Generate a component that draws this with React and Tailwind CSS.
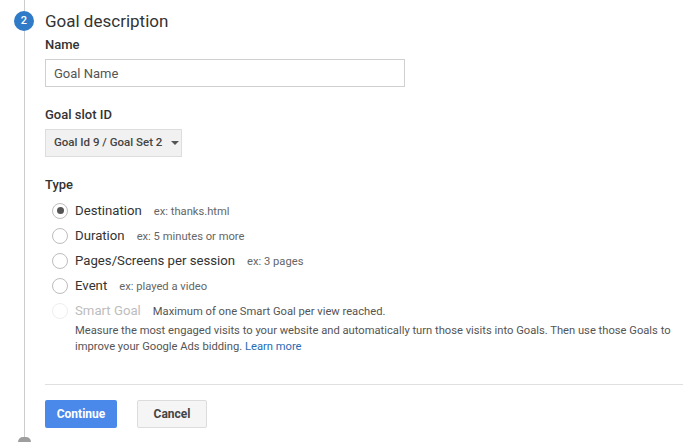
import React from "react";

const types = [
  { label: "Destination", hint: "ex: thanks.html", checked: true },
  { label: "Duration", hint: "ex: 5 minutes or more" },
  { label: "Pages/Screens per session", hint: "ex: 3 pages" },
  { label: "Event", hint: "ex: played a video" },
];

function Radio({ checked, disabled }) {
  return (
    <span
      className={`flex h-[16px] w-[16px] shrink-0 items-center justify-center rounded-full border ${
        disabled ? "border-[#eeeeee]" : "border-[#bdbdbd]"
      } bg-white`}
    >
      {checked && <span className="h-[7px] w-[7px] rounded-full bg-[#555555]" />}
    </span>
  );
}

export default function App() {
  return (
    <div
      className="flex h-[442px] w-[691px] overflow-hidden bg-white text-[#333333]"
      style={{ fontFamily: "Roboto, 'Liberation Sans', sans-serif" }}
    >
      {/* step rail */}
      <div className="flex w-[45px] shrink-0 flex-col">
        <div className="ml-[24px] h-[11px] w-px bg-[#cccccc]" />
        <div className="ml-[14px] flex h-[20px] w-[20px] items-center justify-center rounded-full bg-[#2f7bc8] text-[11px] font-medium text-white">
          2
        </div>
        <div className="ml-[24px] w-px flex-1 bg-[#cccccc]" />
        <div className="ml-[18px] h-[5px] w-[13px] rounded-t-full bg-[#9e9e9e]" />
      </div>

      {/* content */}
      <div className="flex flex-1 flex-col pr-[8px]">
        <h2 className="mt-[9px] text-[17px] leading-[24px] text-[#333333]">Goal description</h2>

        <div className="mt-[4px] text-[13px] font-medium leading-[16px] text-[#333333]">Name</div>
        <input
          className="mt-[6px] h-[28px] w-[360px] border border-[#d0d0d0] px-[8px] text-[13px] text-[#555555] outline-none placeholder:text-[#555555]"
          placeholder="Goal Name"
        />

        <div className="mt-[20px] text-[13px] font-medium leading-[16px]">Goal slot ID</div>
        <button className="mt-[6px] flex h-[28px] w-[137px] items-center gap-[9px] border border-[#dddddd] bg-[#f1f1f1] pl-[8px] text-[11.5px] font-medium text-[#444444]">
          Goal Id 9 / Goal Set 2
          <span className="h-0 w-0 border-x-[4px] border-t-[4px] border-x-transparent border-t-[#555555]" />
        </button>

        <div className="mt-[20px] text-[13px] font-medium leading-[16px]">Type</div>
        <div className="mt-[5px] flex flex-col">
          {types.map((t) => (
            <label key={t.label} className="flex h-[25px] items-center pl-[7px]">
              <Radio checked={t.checked} />
              <span className="ml-[7px] flex items-baseline">
                <span className="text-[13.2px] text-[#333333]">{t.label}</span>
                <span className="ml-[12px] text-[11.2px] text-[#666666]">{t.hint}</span>
              </span>
            </label>
          ))}
          <label className="flex h-[25px] items-center pl-[7px]">
            <Radio disabled />
            <span className="ml-[7px] flex items-baseline">
              <span className="text-[13.2px] text-[#bdbdbd]">Smart Goal</span>
              <span className="ml-[12px] text-[11.2px] text-[#555555]">
                Maximum of one Smart Goal per view reached.
              </span>
            </span>
          </label>
          <p className="pl-[30px] text-[11.2px] leading-[16px] text-[#555555]">
            Measure the most engaged visits to your website and automatically turn those visits into Goals. Then use those Goals to
            <br />
            improve your Google Ads bidding. <a className="text-[#2a6bb5]">Learn more</a>
          </p>
        </div>

        <div className="mt-[29px] h-px bg-[#e0e0e0]" />

        <div className="mt-[15px] flex gap-[20px]">
          <button className="h-[28px] w-[72px] rounded-[2px] bg-[#4a89ea] text-[12px] font-bold text-white">
            Continue
          </button>
          <button className="h-[28px] w-[70px] rounded-[2px] border border-[#dcdcdc] bg-[#f5f5f5] text-[12px] font-bold text-[#444444]">
            Cancel
          </button>
        </div>
      </div>
    </div>
  );
}
